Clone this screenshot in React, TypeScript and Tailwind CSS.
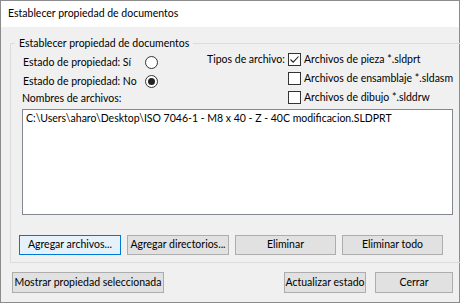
import type { ReactNode } from "react";

const font = "font-['Lato','Liberation_Sans',sans-serif] text-[10.5px] whitespace-nowrap";

function Radio({ checked }: { checked?: boolean }) {
  return (
    <span className="flex h-[13px] w-[13px] items-center justify-center rounded-full border border-[#333] bg-white">
      {checked && <span className="h-[7px] w-[7px] rounded-full bg-[#222]" />}
    </span>
  );
}

function Check({ checked }: { checked?: boolean }) {
  return (
    <span className="flex h-[13px] w-[13px] items-center justify-center border border-[#333] bg-white">
      {checked && (
        <svg width="11" height="11" viewBox="0 0 11 11">
          <path d="M1.5 5.5 L4.2 8.2 L9.5 2.5" fill="none" stroke="#222" strokeWidth="1.1" />
        </svg>
      )}
    </span>
  );
}

function Btn({
  children,
  w,
  primary,
}: {
  children: ReactNode;
  w: string;
  primary?: boolean;
}) {
  return (
    <button
      type="button"
      className={`${w} flex items-center justify-center border ${
        primary ? "border-[#0078d7] bg-[#e5f1fb]" : "border-[#adadad] bg-[#e1e1e1]"
      } text-black`}
    >
      {children}
    </button>
  );
}

export default function App() {
  return (
    <div className={`${font} flex h-[303px] w-[460px] flex-col border border-[#8c8c8c] bg-[#f0f0f0] text-black`}>
      {/* Title bar */}
      <div className="flex h-[26px] items-center bg-white pl-[7px]">
        Establecer propiedad de documentos
      </div>

      {/* Group box */}
      <fieldset className="mr-[6px] ml-[9px] mt-[9px] border border-[#dcdcdc] px-[11px] pb-[7px]">
        <legend className="-ml-[7px] px-[4px] leading-[14px]">
          Establecer propiedad de documentos
        </legend>

        <div className="flex">
          <div className="flex w-[185px] flex-col pt-[3px] pl-px">
            <div className="flex h-[19px] items-center">
              <span className="w-[122px]">Estado de propiedad: Sí</span>
              <Radio />
            </div>
            <div className="flex h-[19px] items-center">
              <span className="w-[122px]">Estado de propiedad: No</span>
              <Radio checked />
            </div>
            <div className="flex h-[16px] items-center -ml-px">Nombres de archivos:</div>
          </div>

          <div className="grid grid-cols-[81px_auto] auto-rows-[19px] items-center">
            <span>Tipos de archivo:</span>
            <label className="flex items-center gap-[3px]">
              <Check checked />
              Archivos de pieza *.sldprt
            </label>
            <span />
            <label className="flex items-center gap-[3px]">
              <Check />
              Archivos de ensamblaje *.sldasm
            </label>
            <span />
            <label className="flex items-center gap-[3px]">
              <Check />
              Archivos de dibujo *.slddrw
            </label>
          </div>
        </div>

        {/* File list */}
        <div className="mt-[2px] h-[106px] border border-[#828790] bg-white px-[3px] pt-[1px]">
          C:\Users\aharo\Desktop\ISO 7046-1 - M8 x 40 - Z - 40C modificacion.SLDPRT
        </div>

        <div className="-ml-[3px] mt-[20px] flex h-[20px] gap-[6px]">
          <Btn w="w-[102px]" primary>
            Agregar archivos...
          </Btn>
          <Btn w="w-[102px]">Agregar directorios...</Btn>
          <Btn w="w-[101px]">Eliminar</Btn>
          <Btn w="w-[101px]">Eliminar todo</Btn>
        </div>
      </fieldset>

      {/* Bottom buttons */}
      <div className="mt-[9px] flex h-[21px] pl-[11px] pr-[6px]">
        <Btn w="w-[152px]">Mostrar propiedad seleccionada</Btn>
        <div className="flex-1" />
        <Btn w="w-[82px]">Actualizar estado</Btn>
        <div className="w-[9px]" />
        <Btn w="w-[78px]">Cerrar</Btn>
      </div>
    </div>
  );
}
